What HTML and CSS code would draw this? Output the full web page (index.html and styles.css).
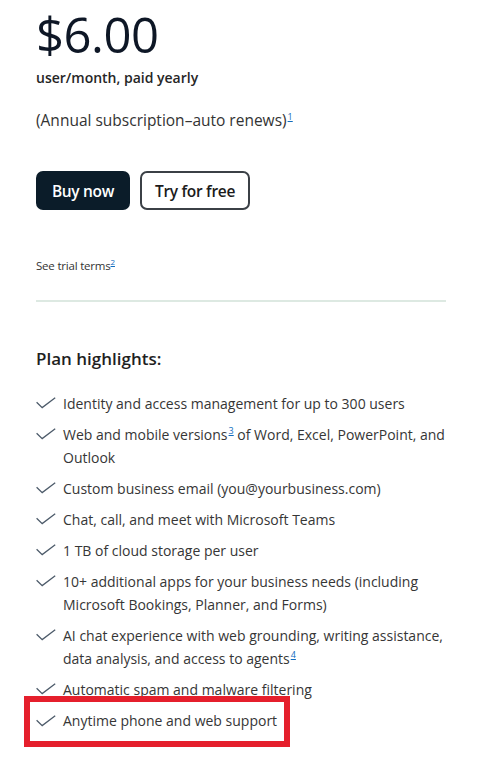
FILE: index.html
```html
<!DOCTYPE html>
<html>
	<head>
		<meta charset="UTF-8">
		<title>Plan</title>
		<link rel="stylesheet" href="styles.css">
	</head>
	<body>
		<div class="plan-card">
			<div class="price">$6.00</div>
			<div class="price-unit">user/month, paid yearly</div>
			<div class="price-note">(Annual subscription–auto renews)<a class="fn" href="###">1</a></div>

			<div class="actions">
				<a class="btn btn-dark" href="###">Buy now</a>
				<a class="btn btn-outline" href="###">Try for free</a>
			</div>

			<div class="trial">See trial terms<a class="fn" href="###">2</a></div>

			<hr class="divider">

			<h3 class="highlights-title">Plan highlights:</h3>
			<ul class="highlights">
				<li><svg class="check" viewBox="0 0 20 12"><path d="M0.6 5.2 L6.2 10.6 L19.2 0.8"/></svg><span>Identity and access management for up to 300 users</span></li>
				<li><svg class="check" viewBox="0 0 20 12"><path d="M0.6 5.2 L6.2 10.6 L19.2 0.8"/></svg><span>Web and mobile versions<a class="fn" href="###">3</a> of Word, Excel, PowerPoint, and Outlook</span></li>
				<li><svg class="check" viewBox="0 0 20 12"><path d="M0.6 5.2 L6.2 10.6 L19.2 0.8"/></svg><span>Custom business email (you@yourbusiness.com)</span></li>
				<li><svg class="check" viewBox="0 0 20 12"><path d="M0.6 5.2 L6.2 10.6 L19.2 0.8"/></svg><span>Chat, call, and meet with Microsoft Teams</span></li>
				<li><svg class="check" viewBox="0 0 20 12"><path d="M0.6 5.2 L6.2 10.6 L19.2 0.8"/></svg><span>1 TB of cloud storage per user</span></li>
				<li><svg class="check" viewBox="0 0 20 12"><path d="M0.6 5.2 L6.2 10.6 L19.2 0.8"/></svg><span>10+ additional apps for your business needs (including Microsoft Bookings, Planner, and Forms)</span></li>
				<li><svg class="check" viewBox="0 0 20 12"><path d="M0.6 5.2 L6.2 10.6 L19.2 0.8"/></svg><span>AI chat experience with web grounding, writing assistance, data analysis, and access to agents<a class="fn" href="###">4</a></span></li>
				<li><svg class="check" viewBox="0 0 20 12"><path d="M0.6 5.2 L6.2 10.6 L19.2 0.8"/></svg><span>Automatic spam and malware filtering</span></li>
				<li class="marked"><svg class="check" viewBox="0 0 20 12"><path d="M0.6 5.2 L6.2 10.6 L19.2 0.8"/></svg><span>Anytime phone and web support</span></li>
			</ul>
		</div>
	</body>
</html>
```

FILE: styles.css
```css
*{
	margin: 0;
	padding: 0;
}
body{
	background: #fff;
	font-family: "Segoe UI", "Open Sans", sans-serif;
	color: #1b1b1b;
	padding-bottom: 30px;
}
ul{
	list-style: none;
}
a{
	text-decoration: none;
}
.plan-card{
	width: 416px;
	padding: 5px 0 0 36px;
}
.price{
	font-size: 49px;
	line-height: 58px;
	color: #0e1726;
	letter-spacing: -0.5px;
}
.price-unit{
	margin-top: 6px;
	font-size: 14px;
	line-height: 18px;
	font-weight: 600;
	color: #262626;
}
.price-note{
	margin-top: 23px;
	font-size: 15.5px;
	line-height: 20px;
	color: #333;
}
.fn{
	font-size: 9px;
	vertical-align: 6px;
	line-height: 0;
	color: #0f6cbd;
	text-decoration: underline;
	margin-left: 1px;
}
.actions{
	margin-top: 41px;
	display: flex;
	gap: 10px;
}
.btn{
	height: 39px;
	box-sizing: border-box;
	display: flex;
	align-items: center;
	justify-content: center;
	border-radius: 7px;
	font-size: 15.5px;
	font-weight: 600;
	letter-spacing: -0.3px;
}
.btn-dark{
	width: 94px;
	background: #0b1c29;
	color: #fff;
}
.btn-outline{
	width: 110px;
	border: 2px solid #3b4046;
	color: #1b1b1b;
}
.trial{
	margin-top: 49px;
	font-size: 11.5px;
	line-height: 14px;
	color: #333;
	letter-spacing: -0.2px;
}
.trial .fn{
	font-size: 8px;
	vertical-align: 5px;
	margin-left: 0;
}
.divider{
	width: 410px;
	margin-top: 27px;
	border: none;
	height: 2px;
	background: #dde9e2;
}
.highlights-title{
	margin-top: 45px;
	font-size: 17px;
	line-height: 23px;
	font-weight: 600;
	color: #1f1f1f;
}
.highlights{
	margin-top: 22px;
	display: flex;
	flex-direction: column;
	gap: 8px;
}
.highlights li{
	display: flex;
	gap: 7px;
	font-size: 14px;
	line-height: 23px;
	color: #363636;
}
.check{
	flex: none;
	width: 20px;
	height: 12px;
	margin-top: 5px;
	fill: none;
	stroke: #4d5b6a;
	stroke-width: 1.3;
}
.highlights li.marked{
	width: fit-content;
	margin: -1px 0 -3px;
	padding: 1px 1px 3px 0;
	outline: 6px solid #e51f2c;
	outline-offset: 6px;
}
.highlights li.marked .check{
	margin-top: 6px;
}
```
